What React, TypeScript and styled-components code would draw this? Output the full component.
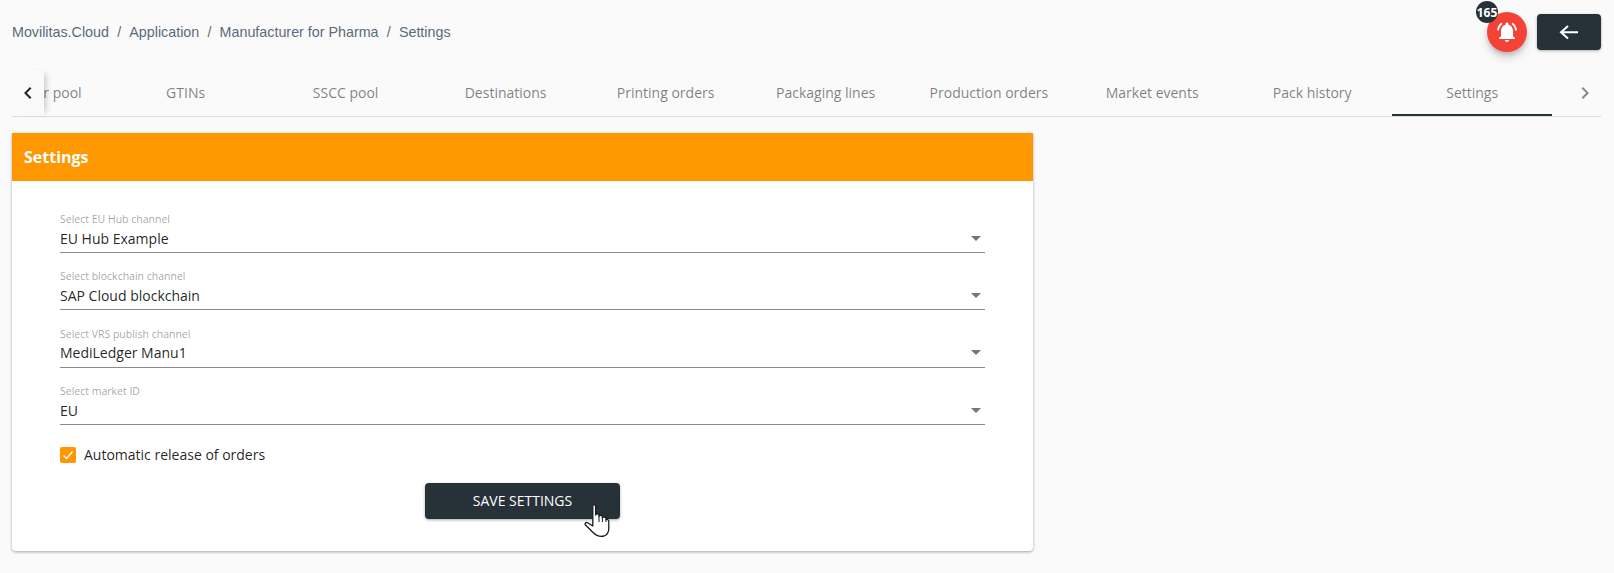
import React from "react";
import styled, { createGlobalStyle } from "styled-components";
import { MdNotificationsActive, MdKeyboardArrowLeft, MdKeyboardArrowRight } from "react-icons/md";

const GlobalStyle = createGlobalStyle`
  html, body {
    margin: 0;
    padding: 0;
    background: #fafafa;
    font-family: "Open Sans", sans-serif;
  }
  * { box-sizing: border-box; }
`;

const Page = styled.div`
  width: 1614px;
  height: 573px;
  padding: 0 13px 0 12px;
  overflow: hidden;
  position: relative;
`;

const TopBar = styled.div`
  height: 70px;
  display: flex;
  align-items: center;
  justify-content: space-between;
  padding-bottom: 6px;
`;

const Breadcrumbs = styled.nav`
  display: flex;
  gap: 8.2px;
  font-family: "Liberation Sans", Arial, sans-serif;
  font-size: 14.3px;
  color: #5b6b7a;
`;

const TopActions = styled.div`
  display: flex;
  align-items: center;
  gap: 10px;
`;

const AlarmButton = styled.div`
  width: 40px;
  height: 40px;
  border-radius: 50%;
  background: #f44336;
  color: #fff;
  display: flex;
  align-items: center;
  justify-content: center;
  font-size: 24px;
  position: relative;
  box-shadow: 0 3px 5px -1px rgba(0, 0, 0, 0.2), 0 6px 10px 0 rgba(0, 0, 0, 0.14);
`;

const Badge = styled.span`
  position: absolute;
  left: -11px;
  top: -11px;
  width: 22px;
  height: 22px;
  border-radius: 50%;
  background: #263238;
  color: #fff;
  font-size: 12px;
  font-weight: 700;
  display: flex;
  align-items: center;
  justify-content: center;
`;

const BackButton = styled.div`
  width: 64px;
  height: 36px;
  border-radius: 4px;
  background: #263238;
  display: flex;
  align-items: center;
  justify-content: center;
  box-shadow: 0 1px 3px rgba(0, 0, 0, 0.3);
`;

const TabBar = styled.div`
  height: 47px;
  display: flex;
  border-bottom: 1px solid #dcdcdc;
`;

const ScrollButton = styled.div<{ $side: "left" | "right" }>`
  width: 32px;
  flex: none;
  display: flex;
  align-items: center;
  justify-content: center;
  font-size: 24px;
  background: #fafafa;
  position: relative;
  z-index: 1;
  color: ${(p) => (p.$side === "left" ? "#222" : "#8a8a8a")};
  box-shadow: ${(p) => (p.$side === "left" ? "6px 0 6px -4px rgba(0,0,0,0.2)" : "none")};
`;

const TabViewport = styled.div`
  flex: 1;
  overflow: hidden;
`;

const TabTrack = styled.div`
  display: flex;
  height: 46px;
  margin-left: -111px;
`;

const Tab = styled.div<{ $active?: boolean }>`
  flex: none;
  min-width: 160px;
  padding: 0 24px;
  display: flex;
  align-items: center;
  justify-content: center;
  font-size: 14px;
  white-space: nowrap;
  color: rgba(0, 0, 0, 0.5);
  border-bottom: 2px solid ${(p) => (p.$active ? "#263238" : "transparent")};
`;

const Card = styled.section`
  width: 1021px;
  margin-top: 16px;
  background: #fff;
  border-radius: 0 0 4px 4px;
  box-shadow: 0 1px 3px rgba(0, 0, 0, 0.35);
`;

const CardHeader = styled.h2`
  margin: 0;
  height: 48px;
  padding: 0 12px;
  display: flex;
  align-items: center;
  background: #ff9800;
  color: #fff;
  font-size: 16px;
  font-weight: 700;
`;

const CardBody = styled.div`
  padding: 31px 48px 32px;
  display: flex;
  flex-direction: column;
`;

const Fields = styled.div`
  display: flex;
  flex-direction: column;
  gap: 16.3px;
`;

const Field = styled.div`
  display: flex;
  flex-direction: column;
`;

const FieldLabel = styled.label`
  font-size: 10.5px;
  line-height: 14px;
  color: rgba(0, 0, 0, 0.38);
`;

const FieldValue = styled.div`
  height: 27px;
  display: flex;
  align-items: center;
  justify-content: space-between;
  font-size: 14px;
  color: rgba(0, 0, 0, 0.87);
  border-bottom: 1px solid #8c8c8c;
  padding: 0 4px 1.5px 0;
`;

const Caret = styled.span`
  width: 0;
  height: 0;
  border-left: 5px solid transparent;
  border-right: 5px solid transparent;
  border-top: 5px solid #757575;
`;

const CheckRow = styled.div`
  margin-top: 20.5px;
  display: flex;
  align-items: center;
  gap: 8px;
  font-size: 14px;
  color: rgba(0, 0, 0, 0.87);
`;

const CheckBox = styled.span`
  width: 16px;
  height: 16px;
  background: #ff9800;
  border-radius: 2px;
  display: flex;
  align-items: center;
  justify-content: center;
`;

const SaveRow = styled.div`
  margin-top: 18.5px;
  display: flex;
  justify-content: center;
`;

const SaveButton = styled.button`
  width: 195px;
  height: 36px;
  border: 0;
  border-radius: 4px;
  background: #263238;
  color: #fff;
  font-family: inherit;
  font-size: 14px;
  font-weight: 500;
  text-transform: uppercase;
  position: relative;
  box-shadow: 0 1px 3px rgba(0, 0, 0, 0.35);
`;

const HandCursor = styled.svg`
  position: absolute;
  left: 159px;
  top: 21px;
`;

const tabs = [
  "Serial number pool",
  "GTINs",
  "SSCC pool",
  "Destinations",
  "Printing orders",
  "Packaging lines",
  "Production orders",
  "Market events",
  "Pack history",
  "Settings",
];

const fields = [
  { label: "Select EU Hub channel", value: "EU Hub Example" },
  { label: "Select blockchain channel", value: "SAP Cloud blockchain" },
  { label: "Select VRS publish channel", value: "MediLedger Manu1" },
  { label: "Select market ID", value: "EU" },
];

const crumbs = ["Movilitas.Cloud", "/", "Application", "/", "Manufacturer for Pharma", "/", "Settings"];

export default function App() {
  return (
    <Page>
      <GlobalStyle />
      <TopBar>
        <Breadcrumbs>
          {crumbs.map((c, i) => (
            <span key={i}>{c}</span>
          ))}
        </Breadcrumbs>
        <TopActions>
          <AlarmButton>
            <Badge>165</Badge>
            <MdNotificationsActive />
          </AlarmButton>
          <BackButton>
            <svg width="24" height="24" viewBox="0 0 24 24" fill="none">
              <path d="M4 12.3H21M11 6L4 12.3L11 18.6" stroke="#fff" strokeWidth="2" />
            </svg>
          </BackButton>
        </TopActions>
      </TopBar>
      <TabBar>
        <ScrollButton $side="left">
          <MdKeyboardArrowLeft />
        </ScrollButton>
        <TabViewport>
          <TabTrack>
            {tabs.map((t) => (
              <Tab key={t} $active={t === "Settings"}>
                {t}
              </Tab>
            ))}
          </TabTrack>
        </TabViewport>
        <ScrollButton $side="right">
          <MdKeyboardArrowRight />
        </ScrollButton>
      </TabBar>
      <Card>
        <CardHeader>Settings</CardHeader>
        <CardBody>
          <Fields>
            {fields.map((f) => (
              <Field key={f.label}>
                <FieldLabel>{f.label}</FieldLabel>
                <FieldValue>
                  {f.value}
                  <Caret />
                </FieldValue>
              </Field>
            ))}
          </Fields>
          <CheckRow>
            <CheckBox>
              <svg width="12" height="12" viewBox="0 0 12 12" fill="none">
                <path d="M1.5 6.5 L4.6 9.5 L10.5 2.5" stroke="#fff" strokeWidth="1.5" />
              </svg>
            </CheckBox>
            Automatic release of orders
          </CheckRow>
          <SaveRow>
            <SaveButton>
              Save settings
              <HandCursor width="26" height="33" viewBox="0 0 26 33">
                <path
                  d="M8.8 2C8.8 .4 11.6 .4 11.6 2V11C11.6 9.6 15 9.6 15 11.2V12.5C15 11 18.4 11 18.4 12.8V14C18.4 12.6 22 12.6 22 14.4V15.5C23.5 15 24.8 16 24.8 17.5V24C24.8 28 23 31 20 32C16 33 12 31.5 9 28.5L1.5 21C.3 19.5 2 17.8 3.6 18.8L8.8 22Z"
                  fill="#fff"
                  stroke="#1a1a1a"
                  strokeWidth="1.3"
                  strokeLinejoin="round"
                />
                <path d="M15 12.5V18M18.4 14V18M22 15.5V18" stroke="#1a1a1a" strokeWidth="1" fill="none" />
              </HandCursor>
            </SaveButton>
          </SaveRow>
        </CardBody>
      </Card>
    </Page>
  );
}
